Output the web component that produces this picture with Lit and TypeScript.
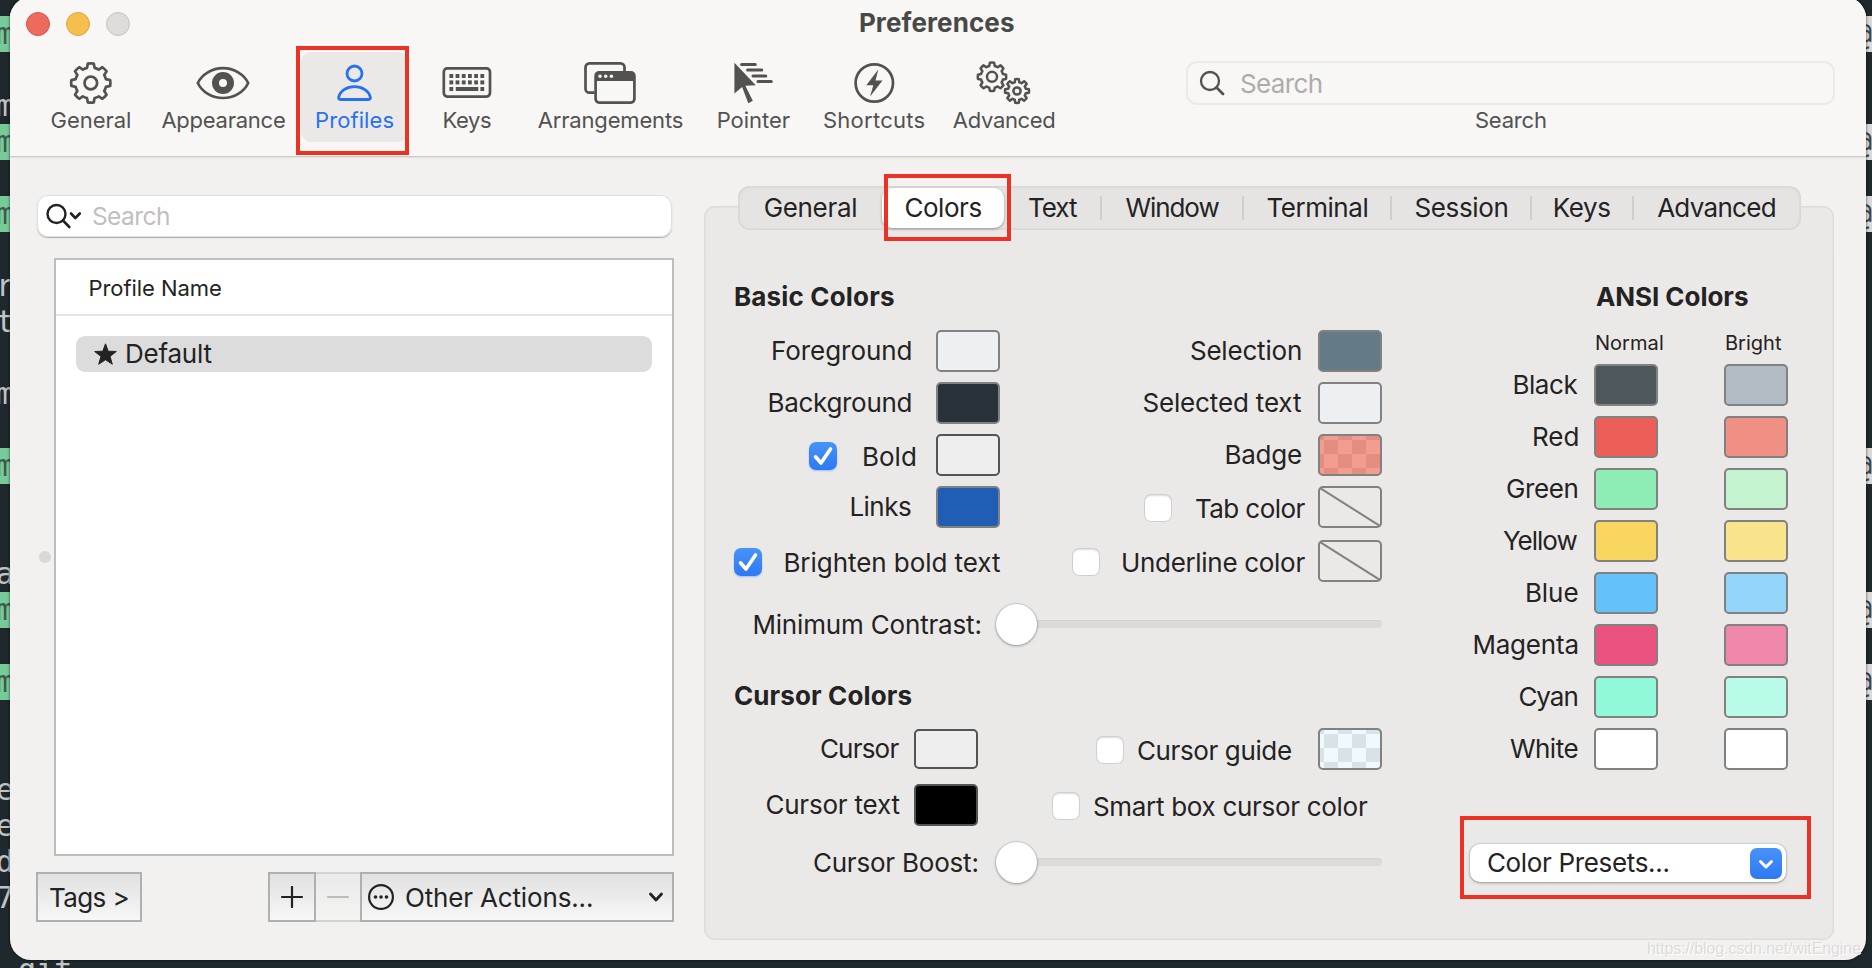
import { LitElement, html, svg, css, nothing } from "lit";
import { customElement, property } from "lit/decorators.js";

const FAMILY = 'Inter, "Liberation Sans", sans-serif';
const ctx = document.createElement("canvas").getContext("2d")!;

/* A run of text tracked so that its ink fills exactly `w` pixels. */
@customElement("fit-text")
class FitText extends LitElement {
  @property() text = "";
  @property({ type: Number }) size = 26;
  @property({ type: Number }) weight = 400;
  @property({ type: Number }) w = 0;

  static styles = css`
    :host { display: block; flex: none; }
    .run { display: block; white-space: pre; font-kerning: normal; line-height: 30px; height: 30px; }
  `;

  render() {
    ctx.font = `${this.weight} ${this.size}px ${FAMILY}`;
    const m = ctx.measureText(this.text);
    const ink = m.actualBoundingBoxLeft + m.actualBoundingBoxRight;
    const track = (this.w - 1 - ink) / (this.text.length - 1);
    return html`<span
      class="run"
      style="width:${this.w}px;font:${this.weight} ${this.size}px/30px ${FAMILY};letter-spacing:${track.toFixed(3)}px;text-indent:${(m.actualBoundingBoxLeft + 0.9).toFixed(2)}px"
      >${this.text}</span>`;
  }
}

const t = (text: string, w: number, size = 26, weight = 400) =>
  html`<fit-text .text=${text} .w=${w} .size=${size} .weight=${weight}></fit-text>`;

function gearPath(cx: number, cy: number, root: number, tip: number): string {
  const at = (r: number, a: number) =>
    `${(cx + r * Math.sin(a)).toFixed(2)} ${(cy - r * Math.cos(a)).toFixed(2)}`;
  let d = "";
  for (let i = 0; i < 8; i++) {
    const a = (i * Math.PI) / 4;
    d += `${i ? "A" + root + " " + root + " 0 0 1" : "M"} ${at(root, a - 0.25)}`;
    d += `L${at(tip, a - 0.15)}A${tip} ${tip} 0 0 1 ${at(tip, a + 0.15)}L${at(root, a + 0.25)}`;
  }
  return d + `A${root} ${root} 0 0 1 ${at(root, -0.25)}Z`;
}

const icons: Record<string, unknown> = {
  general: svg`<g fill="none" stroke="currentColor" stroke-width="2.7" stroke-linejoin="round">
    <path d=${gearPath(28.8, 22, 15.6, 19.6)} /><circle cx="28.800" cy="22" r="6.3" /></g>`,
  appearance: svg`<path d="M2.800 22C7 13.500 17 7.200 28 7.200S49 13.500 53.200 22C49 31 39 37 28 37S7 31 2.800 22Z" fill="none" stroke="currentColor" stroke-width="2.7" />
    <path fill-rule="evenodd" fill="currentColor" d="M28 11a11 11 0 1 0 0 22a11 11 0 1 0 0-22ZM28 18a4 4 0 1 1 0 8a4 4 0 1 1 0-8Z" />`,
  profiles: svg`<g fill="none" stroke="currentColor" stroke-width="2.8"><circle cx="28.500" cy="12.500" r="7.500" />
    <path d="M14.500 38.500C12.800 38.500 12.500 37.300 12.700 36C14 30 20.500 25.600 28.500 25.600S43 30 44.300 36C44.500 37.300 44.200 38.500 42.500 38.500Z" stroke-linejoin="round" /></g>`,
  keys: svg`<rect x="4.800" y="7.400" width="46.200" height="28.200" rx="3.500" fill="none" stroke="currentColor" stroke-width="2.7" />
    <g fill="currentColor">${[0, 1, 2, 3, 4, 5].map((i) => svg`<rect x=${10.4 + i * 6.2} y="13" width="3.800" height="4" /><rect x=${10.4 + i * 6.2} y="19.400" width="3.800" height="4" />`)}
    <rect x="10.400" y="26" width="3.800" height="4" /><rect x="16.800" y="26" width="22.500" height="4" /><rect x="41.400" y="26" width="3.800" height="4" /></g>`,
  arrangements: svg`<path d="M12.500 31.700H7.500A4 4 0 0 1 3.500 27.700V6.400A4 4 0 0 1 7.500 2.400H38.500A4 4 0 0 1 42.500 6.400V11" fill="none" stroke="currentColor" stroke-width="2.7" />
    <rect x="13.600" y="11.400" width="38.800" height="30.200" rx="3.500" fill="none" stroke="currentColor" stroke-width="2.700" />
    <path d="M13 20V14A3 3 0 0 1 16 11H50A3 3 0 0 1 53 14V20Z" fill="currentColor" />
    <g fill="#f8f7f5"><circle cx="18" cy="15.300" r="1.700" /><circle cx="23.700" cy="15.300" r="1.700" /><circle cx="29.400" cy="15.300" r="1.700" /></g>`,
  pointer: svg`<g transform="translate(.8 0)"><path d="M8.600 1.800L30 24.200L19.600 24.800L27 39.800L22.500 42.200L16.300 26L8.600 32.600Z" fill="currentColor" />
    <path d="M15.800 3.500H29.500M21.800 9H36M27.200 15H40M32.200 20.500H45.500" fill="none" stroke="currentColor" stroke-width="3" stroke-linecap="round" /></g>`,
  shortcuts: svg`<circle cx="28.300" cy="22" r="18.700" fill="none" stroke="currentColor" stroke-width="2.700" />
    <path d="M32.300 8.600L20.300 24.200H27.300L24.100 35.400L36.500 19.600H29.500Z" fill="currentColor" />`,
  advanced: svg`<g fill="none" stroke="currentColor" stroke-width="2.500" stroke-linejoin="round">
    <path d=${gearPath(17, 15.8, 11.2, 14.2)} /><circle cx="17" cy="15.800" r="5" />
    <path d=${gearPath(42, 30, 9, 12)} /><circle cx="42" cy="30" r="3.600" /></g>`,
};

interface Tool { id: string; label: string; w: number; gap: number }
const TOOLS: Tool[] = [
  { id: "general", label: "General", w: 79.5, gap: 26.6 },
  { id: "appearance", label: "Appearance", w: 124.5, gap: 2.4 },
  { id: "profiles", label: "Profiles", w: 78.5, gap: 2.1 },
  { id: "keys", label: "Keys", w: 48.5, gap: 21 },
  { id: "arrangements", label: "Arrangements", w: 146, gap: 17.8 },
  { id: "pointer", label: "Pointer", w: 73, gap: 5.9 },
  { id: "shortcuts", label: "Shortcuts", w: 101.5, gap: 5.3 },
  { id: "advanced", label: "Advanced", w: 102.5, gap: -0.6 },
];

/* label, cell width, ink width */
const TABS: [string, number, number][] = [
  ["General", 144, 92.5], ["Colors", 122, 77], ["Text", 97, 49], ["Window", 142, 95],
  ["Terminal", 148, 101], ["Session", 140, 93], ["Keys", 102, 56.5], ["Advanced", 168, 118.5],
];

const ANSI: [string, number, string, string][] = [
  ["Black", 64, "#4d575c", "#b2bcc5"],
  ["Red", 44.5, "#ec5f59", "#f08f84"],
  ["Green", 71.5, "#8eedb4", "#c5f3cf"],
  ["Yellow", 75.5, "#f8d55e", "#fae38d"],
  ["Blue", 51.5, "#65c1fa", "#94d6fb"],
  ["Magenta", 104, "#eb5280", "#ef87ab"],
  ["Cyan", 59, "#8ff9da", "#b9fbe8"],
  ["White", 68.5, "#ffffff", "#ffffff"],
];

/* Terminal rows showing at the left edge: row index, text, highlighted */
const LEFT_ROWS: [number, string, boolean][] = [
  [0, "m", true], [2, "m", false], [3, "m", true], [5, "m", true], [7, "r", false], [8, "t", false],
  [10, "m", false], [12, "m", true], [15, "a", false], [16, "m", true], [18, "m", true],
  [21, "e", false], [22, "e", false], [23, "d", false], [24, "7", false], [26, " git", false],
];
const RIGHT_ROWS = [0, 3, 5, 12, 16, 18];
const LINES = Array.from({ length: 27 }, (_, i) => i);

@customElement("app-root")
class AppRoot extends LitElement {
  static styles = css`
    :host {
      display: grid; grid-template-columns: 10px 1856px 6px; width: 1872px; height: 968px;
      overflow: hidden; background: #1f282c; color: #232323;
      font-family: Inter, "Liberation Sans", sans-serif;
    }
    * { box-sizing: border-box; }
    .term { padding-top: 16px; height: 968px; width: 10px; }
    .line { height: 36px; width: 22px; font: 30px/36px "DejaVu Sans Mono", monospace; color: #c0c4c5; white-space: pre; text-indent: -4px; }
    .line.hot { background: #78cb97; color: #3f5850; }
    .line.git { width: 90px; text-indent: 0; }
    .term.right { width: 6px; overflow: hidden; }
    .term.right .line { width: 6px; text-indent: -12px; overflow: hidden; }
    .term.right .hot { background: #d9d9d9; color: #3a454a; }

    .window {
      z-index: 1; display: flex; flex-direction: column; width: 1856px; height: 963px; margin-top: -3px;
      border-radius: 21px; overflow: hidden; background: #f3f1ef; box-shadow: 0 0 3px rgba(0,0,0,.7);
    }
    .head { height: 160px; flex: none; background: #f8f7f5; border-bottom: 1px solid #cbcac9; box-shadow: 0 1px 1px #e4e3e1; }
    .titlebar { display: flex; height: 55px; padding: 15px 0 0 16px; }
    .light { width: 24px; height: 24px; border-radius: 50%; margin-right: 16px; border: 1px solid; }
    .close { background: #ed6a5f; border-color: #d6554b; }
    .mini { background: #f5bf4f; border-color: #dba73b; }
    .zoom { background: #dddcdb; border-color: #c4c3c2; }
    .title { margin: -4px 0 0 713px; color: #484847; }
    .toolbar { display: flex; color: #525251; }
    .tool { position: relative; height: 90px; padding: 9px 14px 0; border-radius: 10px; display: flex; flex-direction: column; align-items: center; flex: none; }
    .tool svg { width: 56px; height: 44px; margin: 0 -20px; flex: none; display: block; }
    .tool.on { background: #ebe9e8; color: #2671f2; }
    .mark { position: absolute; border: 4px solid #eb3223; z-index: 3; }
    .mark-tool { left: -5px; top: -6px; width: 113px; height: 109px; }
    .finder { display: flex; flex-direction: column; align-items: center; width: 649px; margin-left: 117.500px; padding-top: 9px; }
    .finder-box { width: 649px; height: 44px; flex: none; border: 2px solid #ebeae8; border-radius: 11px; display: flex; align-items: center; padding-left: 11px; color: #525251; }
    .finder-box fit-text { color: #adacab; margin: 0 0 0 15px; padding-top: 2px; }

    .body { display: flex; flex: 1; min-height: 0; }
    .side { width: 694px; display: flex; flex-direction: column; padding: 38px 30px 0 26px; }
    .filter { width: 635px; height: 42px; margin-left: 1px; border-radius: 11px; background: #fff; display: flex; align-items: center; padding-left: 9px;
      box-shadow: inset 0 0 0 1px #e0dfde, 0 1px 1px #adacab; flex: none; color: #222; }
    .filter fit-text { color: #bfbfbf; margin-left: 10px; }
    .split { display: flex; align-items: center; margin-top: 21px; }
    .grip { width: 12px; height: 12px; border-radius: 50%; background: #d9d8d6; margin: 0 3px 0 3px; }
    .table { width: 620px; height: 598px; border: 2px solid #bebebd; background: #fff; }
    .thead { height: 56px; border-bottom: 2px solid #e5e5e5; padding: 13px 0 0 32.500px; }
    .trow { margin: 20px 20px 0; height: 36px; background: #dcdcdc; border-radius: 9px; display: flex; align-items: center; padding-left: 18px; gap: 9px; }
    .actions { display: flex; margin-top: 16px; }
    .btn { height: 50px; border: 2px solid #b0b0af; background: linear-gradient(#e1e1e1, #f7f7f7); display: flex; align-items: center; }
    .btn fit-text { padding-top: 1px; }
    .tags { width: 106px; padding-left: 11px; margin-right: 126px; }
    .plus { width: 48px; justify-content: center; }
    .minus { width: 44px; justify-content: center; border-color: #d2d2d1; border-width: 2px 0; background: linear-gradient(#eaeaea, #f4f4f3); }
    .other { width: 314px; padding: 0 8px 0 6px; gap: 11px; }
    .other .caret { margin-left: auto; }

    .panel { width: 1130px; height: 734px; margin-top: 49px; background: #ebe9e7; border-radius: 11px; box-shadow: inset 0 0 0 1.500px #dedcda; }
    .tabs { display: flex; width: 1063px; height: 44px; margin: -20px 0 0 34px; border-radius: 12px; background: #e6e4e3; box-shadow: inset 0 0 0 1.500px #d8d7d5, inset 0 2px 5px #dedddb; align-items: center; }
    .tab { position: relative; height: 24px; display: flex; align-items: center; justify-content: center; border-left: 2px solid #cfcecd; margin-left: -1px; margin-right: 1px; flex: none; }
    .tab.plain { border-color: transparent; }
    .tab.on { height: 40px; margin: 0; background: #fff; border: 0; border-radius: 10px; box-shadow: 0 1px 3px rgba(0,0,0,.35); }
    .tab:last-child { padding-right: 3px; }
    .mark-tab { left: 2px; top: -14px; width: 127px; height: 67px; }
    .content { display: flex; padding: 52px 46px 0 30px; justify-content: space-between; }
    .basic { width: 648px; }
    .cols { display: flex; justify-content: space-between; }
    .col { display: flex; flex-direction: column; align-items: flex-end; gap: 10px; }
    .top-left { width: 266px; }
    .first { margin-top: 18px; }
    .row { display: flex; align-items: center; height: 42px; }
    .gap2 { margin-top: 2px; }
    .opt { display: flex; align-items: center; padding-top: 2px; }
    .opt fit-text { padding-top: 2px; }
    .cb { width: 28px; height: 28px; border-radius: 7px; background: #fff; box-shadow: inset 0 0 0 1px #d0cfce, inset 0 2px 2px #dcdcdc; flex: none; }
    .cb.yes { background: linear-gradient(#4793f8, #2f78f4); box-shadow: 0 1px 2px rgba(40,110,240,.35); }
    .cb svg { display: block; }
    .sw { width: 64px; height: 42px; border-radius: 5px; border: 2px solid #828181; flex: none; }
    .sw.dark { border-color: #545454; }
    .sw.short { height: 40px; }
    .sw svg { display: block; }
    .badge { background: repeating-conic-gradient(#e58d81 0 25%, #f39d91 0 50%) -10px 4px / 28px 28px; }
    .guide { background: repeating-conic-gradient(#d8e3e8 0 25%, #eff9fe 0 50%) -10px 4px / 28px 28px; }
    .slider { display: flex; align-items: center; justify-content: flex-end; height: 42px; }
    .slider fit-text { padding-top: 1px; }
    .contrast { margin-top: 21px; }
    .boost { margin-top: 15px; }
    .knob { width: 41px; height: 41px; border-radius: 50%; background: #fff; box-shadow: 0 0 1px 1px rgba(0,0,0,.1), 0 1px 3px rgba(0,0,0,.3); flex: none; z-index: 1; margin-left: 15px; }
    .boost .knob { margin-left: 18px; }
    .track { width: 349.500px; height: 8px; margin-left: -4px; border-radius: 4px; background: #dcdbd9; box-shadow: inset 0 1px 1px #d2d1cf; }
    .cursor-head { margin-top: 36px; }
    .cursor-cols { margin-top: 17px; }
    .cursor-left { width: 244px; gap: 14px; }
    .cursor-right { gap: 14px; }
    .ansi { width: 318px; display: flex; flex-direction: column; align-items: flex-end; }
    .ansi-head { width: 193px; }
    .heads { display: flex; width: 193px; gap: 62px; margin-top: 16px; }
    .ansi-rows { margin-top: 6px; }
    .arow { display: flex; align-items: center; justify-content: flex-end; height: 42px; margin-bottom: 10px; }
    .arow fit-text { margin-right: 16.500px; }
    .arow .sw:last-child { margin-left: 66px; }
    .preset { position: relative; width: 316px; height: 38px; margin: 64px 2px 0 0; border-radius: 10px; background: #fff; display: flex; align-items: center; padding: 0 4px 0 17px; justify-content: space-between; box-shadow: 0 0 1px 1px rgba(0,0,0,.08), 0 1px 3px rgba(0,0,0,.3); }
    .pop { width: 32px; height: 31px; border-radius: 7px; background: linear-gradient(#4793f8, #2f78f4); }
    .pop svg { display: block; }
    .mark-preset { left: -10px; top: -28px; width: 351px; height: 83px; }
    .foot { position: absolute; left: 1647px; top: 935px; z-index: 4; color: #dcdbda; text-shadow: 1px 1px 0 #fff; }
    .foot span { font: 16px/28px "Liberation Sans", sans-serif; white-space: nowrap; letter-spacing: -.1px; }
  `;

  sw(color: string, cls = "") {
    return html`<div class="sw ${cls}" style="background:${color}"></div>`;
  }

  none() {
    return html`<div class="sw"><svg width="60" height="38"><path d="M0 0L60 38" stroke="#828181" stroke-width="2" /></svg></div>`;
  }

  check(on: boolean) {
    return html`<div class="cb ${on ? "yes" : ""}">${on
      ? html`<svg width="28" height="28"><path d="M6.500 14.800L12 21L21.500 7" fill="none" stroke="#fff" stroke-width="3.600" stroke-linecap="round" stroke-linejoin="round" /></svg>`
      : nothing}</div>`;
  }

  opt(on: boolean, gap: number, label: unknown) {
    return html`<div class="opt" style="gap:${gap}px">${this.check(on)}${label}</div>`;
  }

  row(gap: number, label: unknown, end: unknown = nothing, cls = "") {
    return html`<div class="row ${cls}" style="gap:${gap}px">${label}${end}</div>`;
  }

  render() {
    return html`
      <div class="term">
        ${LINES.map((i) => {
          const r = LEFT_ROWS.find((x) => x[0] === i);
          return html`<div class="line ${r?.[2] ? "hot" : ""} ${i === 26 ? "git" : ""}">${r ? r[1] : ""}</div>`;
        })}
      </div>
      <div class="window">
        <div class="head">
          <div class="titlebar">
            <div class="light close"></div><div class="light mini"></div><div class="light zoom"></div>
            <div class="title">${t("Preferences", 155, 26, 700)}</div>
          </div>
          <div class="toolbar">
            ${TOOLS.map((x) => html`<div class="tool ${x.id === "profiles" ? "on" : ""}" style="margin-left:${x.gap}px">
              <svg viewBox="0 0 56 44">${icons[x.id]}</svg>${t(x.label, x.w, 22)}
              ${x.id === "profiles" ? html`<div class="mark mark-tool"></div>` : nothing}
            </div>`)}
            <div class="finder">
              <div class="finder-box">
                <svg width="26" height="26"><circle cx="11" cy="11" r="9" fill="none" stroke="currentColor" stroke-width="2.300" /><path d="M17.500 17.500L24 24" stroke="currentColor" stroke-width="2.800" stroke-linecap="round" /></svg>
                ${t("Search", 82, 26)}
              </div>
              ${t("Search", 71, 22)}
            </div>
          </div>
        </div>

        <div class="body">
          <div class="side">
            <div class="filter">
              <svg width="36" height="26"><circle cx="10.500" cy="11" r="9" fill="none" stroke="currentColor" stroke-width="2.400" /><path d="M17 17.500L23.300 24M25 10.500L29.300 15L33.800 10.500" fill="none" stroke="currentColor" stroke-width="2.600" stroke-linecap="round" stroke-linejoin="round" /></svg>
              ${t("Search", 77, 24.5)}
            </div>
            <div class="split">
              <div class="grip"></div>
              <div class="table">
                <div class="thead">${t("Profile Name", 132.5, 22)}</div>
                <div class="trow">
                  <svg width="23" height="22" viewBox="0 0 23 22"><path d="M11.500 .8L14.200 8.200L22.300 8.500L16 13.400L18.300 21.200L11.500 16.700L4.700 21.200L7 13.400L.7 8.500L8.800 8.200Z" fill="#222" stroke="#222" stroke-linejoin="round" /></svg>
                  ${t("Default", 85.5)}
                </div>
              </div>
            </div>
            <div class="actions">
              <div class="btn tags">${t("Tags >", 78.5)}</div>
              <div class="btn plus"><svg width="22" height="22"><path d="M1 11H21M11 1V21" stroke="#222" stroke-width="2.200" stroke-linecap="round" /></svg></div>
              <div class="btn minus"><svg width="22" height="22"><path d="M1 11H21" stroke="#bcbcbb" stroke-width="2.200" stroke-linecap="round" /></svg></div>
              <div class="btn other">
                <svg width="26" height="26"><circle cx="13" cy="13" r="11.900" fill="none" stroke="#222" stroke-width="2.200" /><circle cx="7.500" cy="13" r="1.800" fill="#222" /><circle cx="13" cy="13" r="1.800" fill="#222" /><circle cx="18.500" cy="13" r="1.800" fill="#222" /></svg>
                ${t("Other Actions...", 187)}
                <svg class="caret" width="16" height="12"><path d="M2.500 3L8 9L13.500 3" fill="none" stroke="#222" stroke-width="2.800" stroke-linecap="round" stroke-linejoin="round" /></svg>
              </div>
            </div>
          </div>

          <div class="panel">
            <div class="tabs">
              ${TABS.map(([label, cell, w], i) => html`<div class="tab ${i === 1 ? "on" : i < 3 ? "plain" : ""}" style="width:${cell}px">
                ${t(label, w)}${i === 1 ? html`<div class="mark mark-tab"></div>` : nothing}
              </div>`)}
            </div>
            <div class="content">
              <div class="basic">
                ${t("Basic Colors", 160, 26, 700)}
                <div class="cols first">
                  <div class="col top-left">
                    ${this.row(25.4, t("Foreground", 138.5), this.sw("#edeff2"))}
                    ${this.row(25.4, t("Background", 142), this.sw("#283238"))}
                    ${this.row(21, this.opt(true, 26.5, t("Bold", 52)), this.sw("#eeeeee", "dark"))}
                    ${this.row(25, t("Links", 60.5), this.sw("#205eb6"))}
                    ${this.row(0, this.opt(true, 22.5, t("Brighten bold text", 215.5)), nothing, "gap2")}
                  </div>
                  <div class="col">
                    ${this.row(17, t("Selection", 111), this.sw("#647a87"))}
                    ${this.row(17, t("Selected text", 158.5), this.sw("#edeff2"))}
                    ${this.row(17, t("Badge", 75.5), html`<div class="sw badge"></div>`)}
                    ${this.row(12.5, this.opt(false, 23.5, t("Tab color", 110.5)), this.none())}
                    ${this.row(12.5, this.opt(false, 22, t("Underline color", 183.5)), this.none(), "gap2")}
                  </div>
                </div>
                <div class="slider contrast">
                  ${t("Minimum Contrast:", 227)}<div class="knob"></div><div class="track"></div>
                </div>
                <div class="cursor-head">${t("Cursor Colors", 177.5, 26, 700)}</div>
                <div class="cols cursor-cols">
                  <div class="col cursor-left">
                    ${this.row(14.5, t("Cursor", 79.5), this.sw("#eeeeee", "dark short"))}
                    ${this.row(14.5, t("Cursor text", 134), this.sw("#000000", "dark"))}
                  </div>
                  <div class="col cursor-right">
                    ${this.row(27, this.opt(false, 13, t("Cursor guide", 154)), html`<div class="sw guide"></div>`)}
                    ${this.row(14, this.opt(false, 13, t("Smart box cursor color", 275)), html`<i></i>`)}
                  </div>
                </div>
                <div class="slider boost">
                  ${t("Cursor Boost:", 164.5)}<div class="knob"></div><div class="track"></div>
                </div>
              </div>

              <div class="ansi">
                <div class="ansi-head">${t("ANSI Colors", 153, 26, 700)}</div>
                <div class="heads">${t("Normal", 68, 20)}${t("Bright", 57, 20)}</div>
                <div class="ansi-rows">
                  ${ANSI.map(([label, w, a, b]) => html`<div class="arow">${t(label, w)}${this.sw(a)}${this.sw(b)}</div>`)}
                </div>
                <div class="preset">
                  ${t("Color Presets...", 181.5)}
                  <div class="pop"><svg width="32" height="31"><path d="M10.500 13.500L16 19L21.500 13.500" fill="none" stroke="#fff" stroke-width="3" stroke-linecap="round" stroke-linejoin="round" /></svg></div>
                  <div class="mark mark-preset"></div>
                </div>
              </div>
            </div>
          </div>
        </div>
      </div>
      <div class="term right">
        ${LINES.map((i) => html`<div class="line ${RIGHT_ROWS.includes(i) ? "hot" : ""}">${RIGHT_ROWS.includes(i) ? "@" : ""}</div>`)}
      </div>
      <div class="foot"><span>https://blog.csdn.net/witEngine</span></div>
    `;
  }
}
